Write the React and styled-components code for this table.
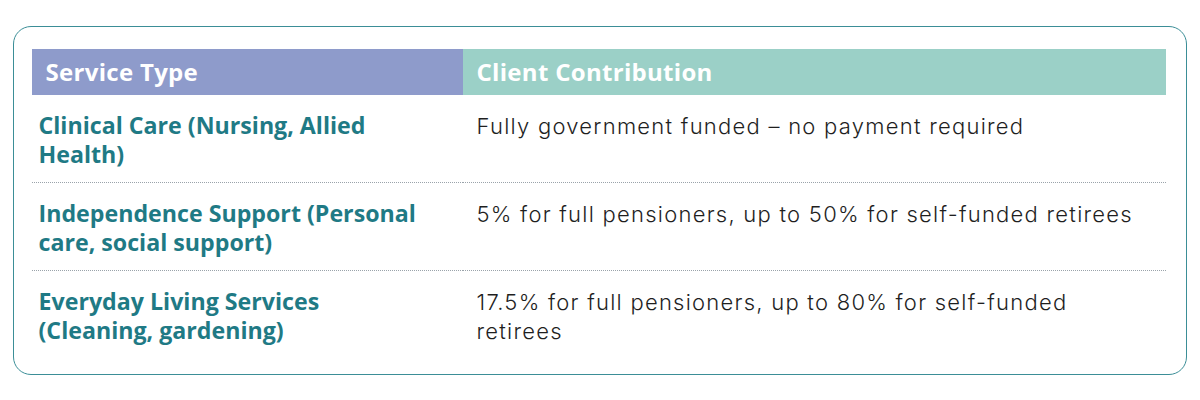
import React from 'react'
import styled, { createGlobalStyle } from 'styled-components'

const GlobalStyle = createGlobalStyle`
  html, body {
    margin: 0;
    padding: 0;
    background: #ffffff;
  }
  body {
    font-family: "Open Sans", Inter, sans-serif;
  }
`

const rows = [
  {
    service: 'Clinical Care (Nursing, Allied Health)',
    contribution: 'Fully government funded – no payment required',
  },
  {
    service: 'Independence Support (Personal care, social support)',
    contribution: '5% for full pensioners, up to 50% for self-funded retirees',
  },
  {
    service: 'Everyday Living Services (Cleaning, gardening)',
    contribution: '17.5% for full pensioners, up to 80% for self-funded retirees',
  },
]

function App() {
  return (
    <Page>
      <GlobalStyle />
      <Card>
        <Table>
          <HeadCell tone="#8e9bcb">Service Type</HeadCell>
          <HeadCell tone="#9bd0c7">Client Contribution</HeadCell>
          {rows.map((row, i) => (
            <React.Fragment key={row.service}>
              <ServiceCell last={i === rows.length - 1}>{row.service}</ServiceCell>
              <ValueCell last={i === rows.length - 1}>{row.contribution}</ValueCell>
            </React.Fragment>
          ))}
        </Table>
      </Card>
    </Page>
  )
}

const Page = styled.main`
  padding: 26px 13px 0 13px;
  width: 1174px;
`

const Card = styled.section`
  border: 1.5px solid #3b8e97;
  border-radius: 18px;
  padding: 22px 20.5px 16px 17.5px;
`

const Table = styled.div`
  display: grid;
  grid-template-columns: 431px 1fr;
`

const HeadCell = styled.div`
  background: ${(p) => p.tone};
  color: #ffffff;
  font-family: "Open Sans", sans-serif;
  font-weight: 700;
  font-size: 24px;
  letter-spacing: 0.3px;
  height: 46px;
  line-height: 46px;
  padding-left: 14px;
`

const Cell = styled.div`
  line-height: 29px;
  border-bottom: ${(p) => (p.last ? 'none' : '1px dotted #9aa3aa')};
`

const ServiceCell = styled(Cell)`
  color: #1f7a85;
  font-family: "Open Sans", sans-serif;
  font-weight: 700;
  font-size: 23.2px;
  padding: 15.5px 40px 13.5px 7px;
`

const ValueCell = styled(Cell)`
  color: #1f1f1f;
  font-family: Inter, "Open Sans", sans-serif;
  font-weight: 300;
  font-size: 22px;
  letter-spacing: 1.25px;
  padding: 16.6px 18px 12.4px 14px;
`

export default App
